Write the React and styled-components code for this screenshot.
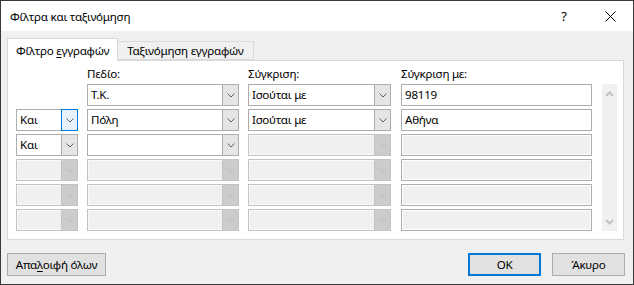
import React from 'react';
import styled, { createGlobalStyle } from 'styled-components';

const GlobalStyle = createGlobalStyle`
  html, body {
    margin: 0;
    padding: 0;
    background: #ffffff;
  }
  * {
    box-sizing: border-box;
  }
`;

const Window = styled.div`
  width: 634px;
  height: 285px;
  border: 1px solid #3a3a3a;
  display: flex;
  flex-direction: column;
  font-family: 'Noto Sans', 'Open Sans', sans-serif;
  font-size: 11.6px;
  letter-spacing: -0.25px;
  color: #000;
  background: #f0f0f0;
`;

const TitleBar = styled.div`
  height: 30px;
  background: #ffffff;
  display: flex;
  align-items: center;
  padding-left: 9px;
`;

const TitleText = styled.div`
  flex: 1;
`;

const TitleButton = styled.div`
  width: 46px;
  height: 30px;
  display: flex;
  align-items: center;
  justify-content: center;
  font-size: 13px;
`;

const Body = styled.div`
  flex: 1;
  display: flex;
  flex-direction: column;
  padding: 7px 9px 0 6px;
`;

const TabStrip = styled.div`
  display: flex;
  align-items: flex-start;
  height: 22px;
  position: relative;
  z-index: 1;
`;

const Tab = styled.div`
  height: ${p => (p.$active ? '23px' : '19px')};
  margin-top: ${p => (p.$active ? '0' : '3px')};
  padding: 0 ${p => (p.$active ? '8px' : '9px')};
  display: flex;
  align-items: center;
  border: 1px solid #d9d9d9;
  border-bottom: ${p => (p.$active ? 'none' : '1px solid #d9d9d9')};
  border-left: ${p => (p.$active ? '1px solid #d9d9d9' : 'none')};
  background: ${p => (p.$active ? '#ffffff' : '#f0f0f0')};
  white-space: nowrap;
`;

const Key = styled.span`
  text-decoration: underline;
  text-underline-offset: 2px;
`;

const Panel = styled.div`
  height: 180px;
  border: 1px solid #d9d9d9;
  background: #ffffff;
  padding: 6px 0 8px 8px;
`;

const Grid = styled.div`
  display: grid;
  grid-template-columns: 62px 152px 143px 192px 16px;
  grid-template-rows: 14px repeat(6, 22px);
  column-gap: 9px;
  row-gap: 3px;
`;

const HeaderLabel = styled.div`
  line-height: 14px;
  margin-left: ${p => (p.$shift ? '1px' : '0')};
`;

const Combo = styled.div`
  display: flex;
  height: 22px;
  border: 1px solid ${p => (p.$disabled ? '#c3c3c3' : '#adadad')};
  background: ${p => (p.$disabled ? '#f0f0f0' : '#ffffff')};
  box-shadow: ${p => (p.$disabled ? 'inset 0 0 0 1px #fafafa' : 'none')};
`;

const ComboValue = styled.div`
  flex: 1;
  padding-left: 3px;
  line-height: 20px;
  white-space: nowrap;
  overflow: hidden;
`;

const ComboArrow = styled.div`
  width: 17px;
  margin: -1px -1px -1px 0;
  display: flex;
  align-items: center;
  justify-content: center;
  background: ${p => (p.$focus ? '#e5f1fb' : p.$disabled ? '#cccccc' : '#e5e5e5')};
  border: 1px solid ${p => (p.$focus ? '#0078d7' : p.$disabled ? '#c3c3c3' : '#adadad')};
`;

const TextField = styled.div`
  height: 22px;
  margin-left: 1px;
  border: 1px solid #adadad;
  background: ${p => (p.$disabled ? '#f0f0f0' : '#ffffff')};
  box-shadow: ${p => (p.$disabled ? 'inset 0 0 0 1px #ffffff' : 'none')};
  padding-left: 3px;
  line-height: 20px;
`;

const ScrollBar = styled.div`
  grid-column: 5;
  grid-row: 2 / span 6;
  margin-left: 1px;
  background: #f0f0f0;
  display: flex;
  flex-direction: column;
  justify-content: space-between;
  align-items: center;
  padding: 7px 0 6px;
`;

const Footer = styled.div`
  display: flex;
  align-items: center;
  padding-top: 13px;
  gap: 11px;
`;

const Button = styled.div`
  height: 23px;
  width: ${p => (p.$wide ? '99px' : '73px')};
  margin-left: ${p => (p.$push ? 'auto' : '0')};
  margin-right: ${p => (p.$last ? '-1px' : '0')};
  display: flex;
  align-items: center;
  justify-content: center;
  background: #e1e1e1;
  border: ${p => (p.$default ? '2px solid #0078d7' : '1px solid #adadad')};
  white-space: nowrap;
`;

const Chevron = ({ color }) => (
  <svg width="8" height="5" viewBox="0 0 8 5">
    <polyline points="0.5,0.5 4,4 7.5,0.5" fill="none" stroke={color} strokeWidth="1" />
  </svg>
);

const ScrollArrow = ({ up }) => (
  <svg width="9" height="6" viewBox="0 0 9 6">
    <polyline
      points={up ? '1,5 4.5,1.5 8,5' : '1,1 4.5,4.5 8,1'}
      fill="none"
      stroke="#c2c2c2"
      strokeWidth="2"
    />
  </svg>
);

function ComboBox({ value, disabled, focus }) {
  return (
    <Combo $disabled={disabled}>
      <ComboValue>{value}</ComboValue>
      <ComboArrow $disabled={disabled} $focus={focus}>
        <Chevron color={disabled ? '#bdbdbd' : '#606060'} />
      </ComboArrow>
    </Combo>
  );
}

// on: how many of the row's controls are enabled
const rows = [
  { op: null, field: 'Τ.Κ.', cmp: 'Ισούται με', val: '98119', on: 3 },
  { op: 'Και', field: 'Πόλη', cmp: 'Ισούται με', val: 'Αθήνα', on: 4, focus: true },
  { op: 'Και', field: '', cmp: '', val: '', on: 2 },
  { op: '', field: '', cmp: '', val: '', on: 0 },
  { op: '', field: '', cmp: '', val: '', on: 0 },
  { op: '', field: '', cmp: '', val: '', on: 0 },
];

export default function App() {
  return (
    <>
      <GlobalStyle />
      <Window>
        <TitleBar>
          <TitleText>Φίλτρα και ταξινόμηση</TitleText>
          <TitleButton>?</TitleButton>
          <TitleButton>
            <svg width="11" height="11" viewBox="0 0 11 11">
              <path d="M0.5 0.5 L10.5 10.5 M10.5 0.5 L0.5 10.5" stroke="#000" strokeWidth="1" />
            </svg>
          </TitleButton>
        </TitleBar>
        <Body>
          <TabStrip>
            <Tab $active>
              <span>
                Φίλτρο <Key>ε</Key>γγραφών
              </span>
            </Tab>
            <Tab>
              <span>Ταξινόμηση εγγραφών</span>
            </Tab>
          </TabStrip>
          <Panel>
            <Grid>
              <div />
              <HeaderLabel>Πεδίο:</HeaderLabel>
              <HeaderLabel>Σύγκριση:</HeaderLabel>
              <HeaderLabel $shift>Σύγκριση με:</HeaderLabel>
              <div />
              {rows.map((r, i) => (
                <React.Fragment key={i}>
                  {r.op === null ? (
                    <div />
                  ) : (
                    <ComboBox value={r.op} disabled={r.on < 2} focus={r.focus} />
                  )}
                  <ComboBox value={r.field} disabled={r.on < 2} />
                  <ComboBox value={r.cmp} disabled={r.on < 3} />
                  <TextField $disabled={r.on < 3}>{r.val}</TextField>
                </React.Fragment>
              ))}
              <ScrollBar>
                <ScrollArrow up />
                <ScrollArrow />
              </ScrollBar>
            </Grid>
          </Panel>
          <Footer>
            <Button $wide>
              <span>
                Απα<Key>λ</Key>οιφή όλων
              </span>
            </Button>
            <Button $push $default>OK</Button>
            <Button $last>Άκυρο</Button>
          </Footer>
        </Body>
      </Window>
    </>
  );
}
